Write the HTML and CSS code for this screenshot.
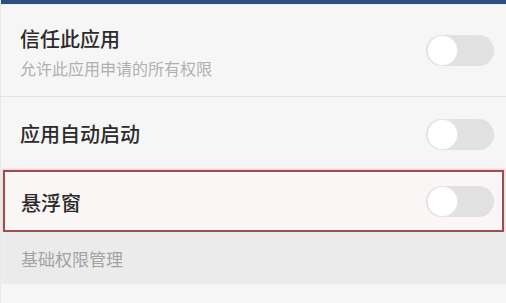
FILE: index.html
```html
<!DOCTYPE html>
<html lang="zh-CN">
<head>
<meta charset="utf-8">
<link rel="stylesheet" href="styles.css">
</head>
<body>
<div class="topbar"></div>
<div class="list">
  <div class="row row-trust">
    <div class="text">
      <div class="title">信任此应用</div>
      <div class="subtitle">允许此应用申请的所有权限</div>
    </div>
    <div class="toggle"><span class="knob"></span></div>
  </div>
  <div class="row row-auto">
    <div class="title">应用自动启动</div>
    <div class="toggle"><span class="knob"></span></div>
  </div>
  <div class="row row-float">
    <div class="title">悬浮窗</div>
    <div class="toggle"><span class="knob"></span></div>
  </div>
  <div class="section">基础权限管理</div>
</div>
</body>
</html>
```
FILE: styles.css
```css
html, body {
  margin: 0;
  padding: 0;
}
body {
  width: 506px;
  height: 303px;
  overflow: hidden;
  background: #f6f6f6;
  font-family: "Noto Sans CJK SC", "Noto Sans", sans-serif;
  border-left: 1px solid #e3ece3;
  box-sizing: border-box;
}
.topbar {
  height: 4px;
  background: #2d4e7f;
  border-bottom: 1px solid #e6ecf4;
}
.list {
  display: flex;
  flex-direction: column;
}
.row {
  display: flex;
  align-items: center;
  justify-content: space-between;
  padding: 0 12px 0 19px;
  box-sizing: border-box;
}
.row-trust {
  height: 92px;
  border-bottom: 1px solid #e4e4e4;
}
.row-trust .text {
  padding-top: 3px;
}
.row-auto {
  height: 73px;
  padding-top: 1px;
}
.row-float {
  height: 62px;
  margin: 0 2px 0 2px;
  padding-left: 16px;
  padding-right: 8px;
  border: 2px solid #9c4f50;
  background: #fbf6f6;
  box-shadow: 0 0 2px 1px #f3c9c9;
}
.row-float .title {
  padding-top: 4px;
}
.title {
  font-size: 20px;
  line-height: 24px;
  color: #2a2a2a;
  font-weight: 500;
}
.subtitle {
  margin-top: 8px;
  font-size: 16px;
  line-height: 18px;
  color: #b0b0b0;
}
.toggle {
  width: 68px;
  height: 31px;
  border-radius: 16px;
  background: #e1e1e1;
  position: relative;
  flex: none;
}
.knob {
  position: absolute;
  left: 2px;
  top: 1px;
  width: 29px;
  height: 29px;
  border-radius: 50%;
  background: #ffffff;
  box-shadow: 0 0 1px 1px #e8e8e8;
}
.section {
  height: 52px;
  display: flex;
  align-items: center;
  padding-left: 20px;
  background: #ebebeb;
  font-size: 17px;
  color: #a3a3a3;
}
```
